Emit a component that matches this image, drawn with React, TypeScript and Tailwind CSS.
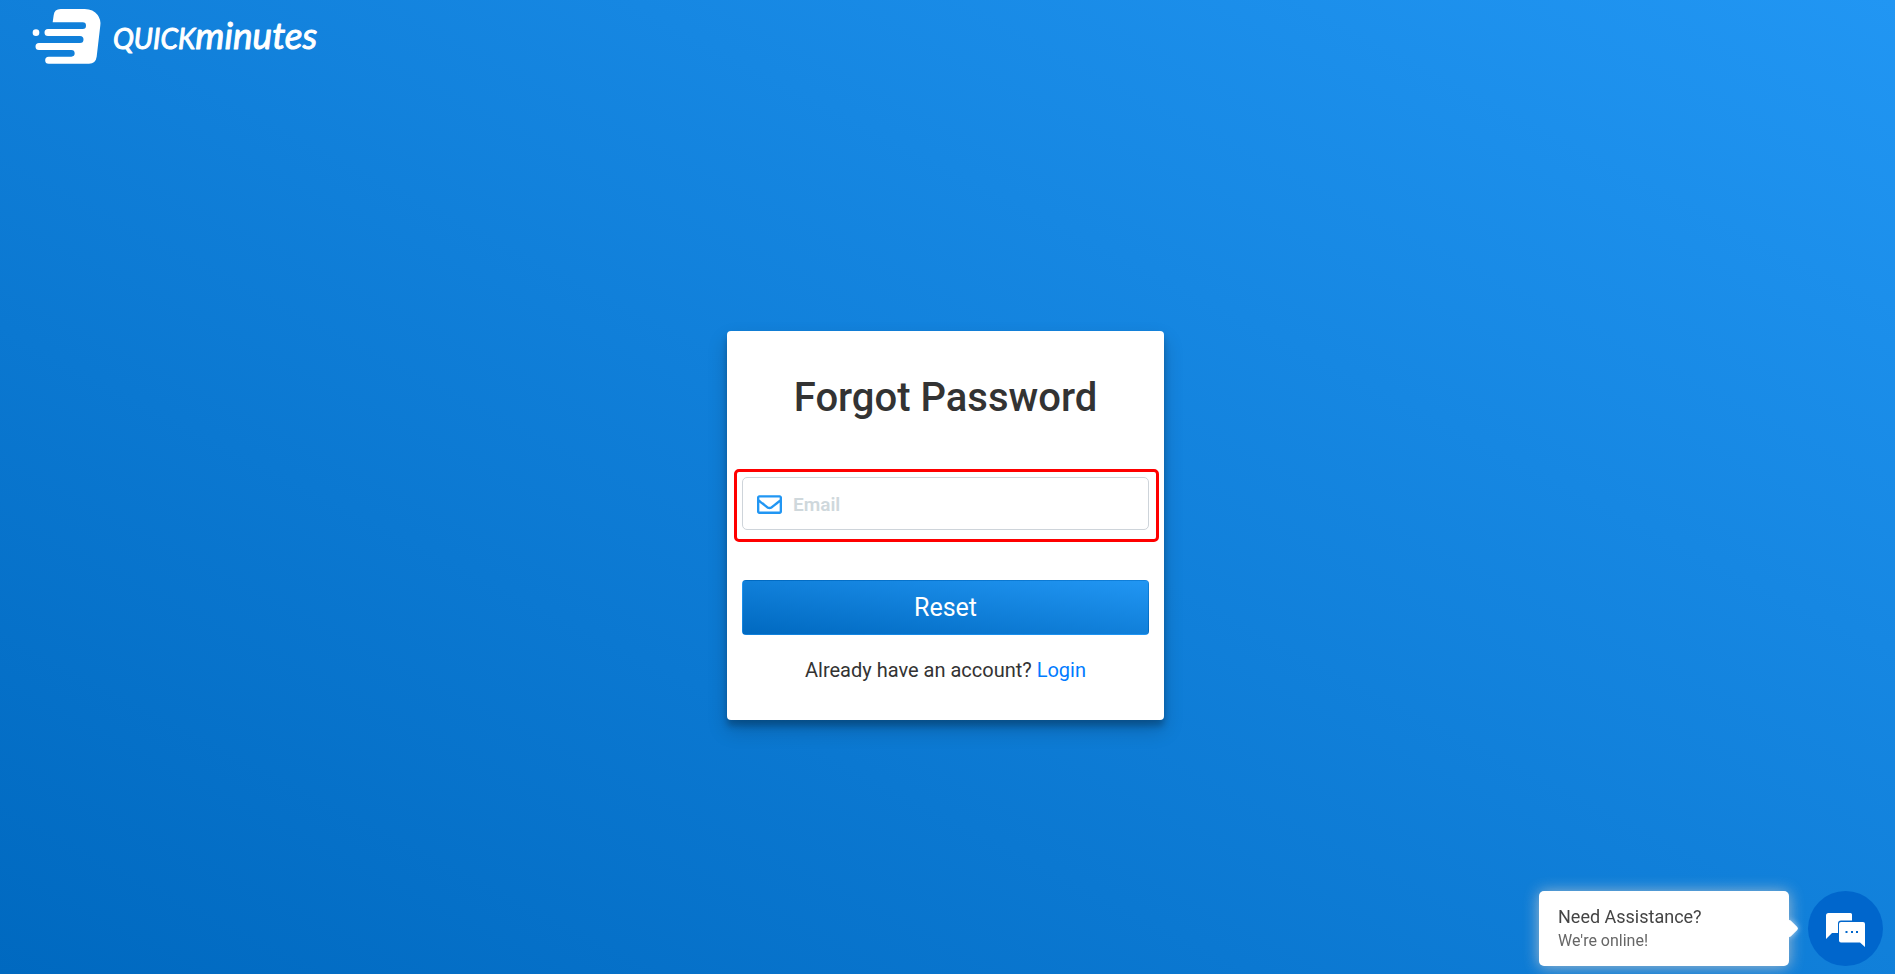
import { useState } from "react";
import { FaRegEnvelope } from "react-icons/fa";

function Logo() {
  return (
    <svg
      width="290"
      height="61"
      viewBox="32 8 290 61"
      fill="#fff"
      role="img"
      aria-label="quickminutes"
    >
      <g transform="translate(20 0) scale(0.33333)">
        <circle cx="48" cy="98" r="10" />
        <path d="M98 67L101 46Q103 27 122 27H194Q220 27 233 45Q243 59 241 76L230 170Q227 191 207 191H86a10.500 10.500 0 0 1 0-21H154a10 10 0 0 0 0-20H57a10.500 10.500 0 0 1 0-21H180a10.500 10.500 0 0 0 0-21H84a10.500 10.500 0 0 1 0-21H188a10 10 0 0 0 0-20Z" />
      </g>
      <text
        x="113"
        y="49"
        fontFamily="Lato, sans-serif"
        fontStyle="italic"
        stroke="#fff"
        strokeWidth="1"
        strokeLinejoin="round"
      >
        <tspan fontSize="28">QUICK</tspan>
        <tspan fontSize="37">minutes</tspan>
      </text>
    </svg>
  );
}

function ChatIcon() {
  return (
    <svg width="40" height="36" viewBox="0 0 40 36" fill="#fff" aria-hidden="true">
      <path d="M2.500 0H24.500Q26 0 26 1.500V7.500H15Q12 7.500 12 10.500V20H6L0 26V2.500Q0 0 2.500 0Z" />
      <path
        fillRule="evenodd"
        d="M15 9H37Q39 9 39 11V34L34 29.500H15Q13 29.500 13 27.500V11Q13 9 15 9ZM19.500 18v2h2v-2ZM25 18v2h2v-2ZM30 18v2h2v-2Z"
      />
    </svg>
  );
}

function ChatWidget() {
  return (
    <div className="fixed right-3 bottom-2 flex items-center gap-[19px]">
      <div className="relative h-[75px] w-[250px] rounded-[5px] bg-white px-[19px] pt-[14px] shadow-[0_1px_15px_rgba(204,204,204,0.8)]">
        <span className="absolute top-[31px] -right-[7px] size-[13px] rotate-45 rounded-[2px] bg-white shadow-[0_0_6px_rgba(255,255,255,0.6)]" />
        <div className="relative text-lg leading-6 text-[#444]">Need Assistance?</div>
        <div className="relative text-base leading-6 text-[#666]">We're online!</div>
      </div>
      <button
        aria-label="Open chat"
        className="flex size-[75px] cursor-pointer items-center justify-center rounded-full bg-[#0066cc] pt-1"
      >
        <ChatIcon />
      </button>
    </div>
  );
}

export default function App() {
  const [email, setEmail] = useState("");

  return (
    <div className="flex min-h-screen flex-col bg-[linear-gradient(to_top_right,#0069c0,#2196f3)] font-[Roboto,sans-serif] text-[#333]">
      <header className="py-2 pl-8">
        <a href="#" className="inline-block align-top">
          <Logo />
        </a>
      </header>

      <main className="flex flex-1 items-center justify-center pr-1">
        <form
          onSubmit={(e) => e.preventDefault()}
          className="w-full max-w-[437px] rounded-[4px] bg-white px-[15px] pt-10 pb-[35px] shadow-[0_10px_20px_rgba(0,0,0,0.19),0_6px_6px_rgba(0,0,0,0.23)]"
        >
          <h1 className="text-center text-[40px] leading-[54px] font-medium">Forgot Password</h1>

          {/* Email */}
          <div className="relative mt-[52px]">
            <label
              htmlFor="email"
              aria-label="Email"
              className="absolute inset-y-0 left-[15px] flex items-center pt-0.5 text-[#2196f3]"
            >
              <FaRegEnvelope size={25} />
            </label>
            <input
              id="email"
              type="email"
              placeholder="Email"
              value={email}
              onChange={(e) => setEmail(e.target.value)}
              className="h-[53px] w-full rounded-[5px] border border-[#ced4da] pt-0.5 pl-[50px] text-[19px] font-semibold outline-none placeholder:text-[#cfd8dc]"
            />
            <span className="pointer-events-none absolute -top-2 -right-[10px] -bottom-3 -left-2 rounded-[5px] border-3 border-[#ff0000]" />
          </div>

          <button
            type="submit"
            className="mt-[50px] block h-[55px] w-full cursor-pointer rounded-[4px] border border-transparent bg-[linear-gradient(to_top_right,#0069c0,#2196f3)] text-[25px] text-white"
          >
            Reset
          </button>

          <p className="mt-5 text-center text-xl leading-[30px]">
            Already have an account?{" "}
            <a href="#" className="text-[#007bff]">
              Login
            </a>
          </p>
        </form>
      </main>

      <ChatWidget />
    </div>
  );
}
